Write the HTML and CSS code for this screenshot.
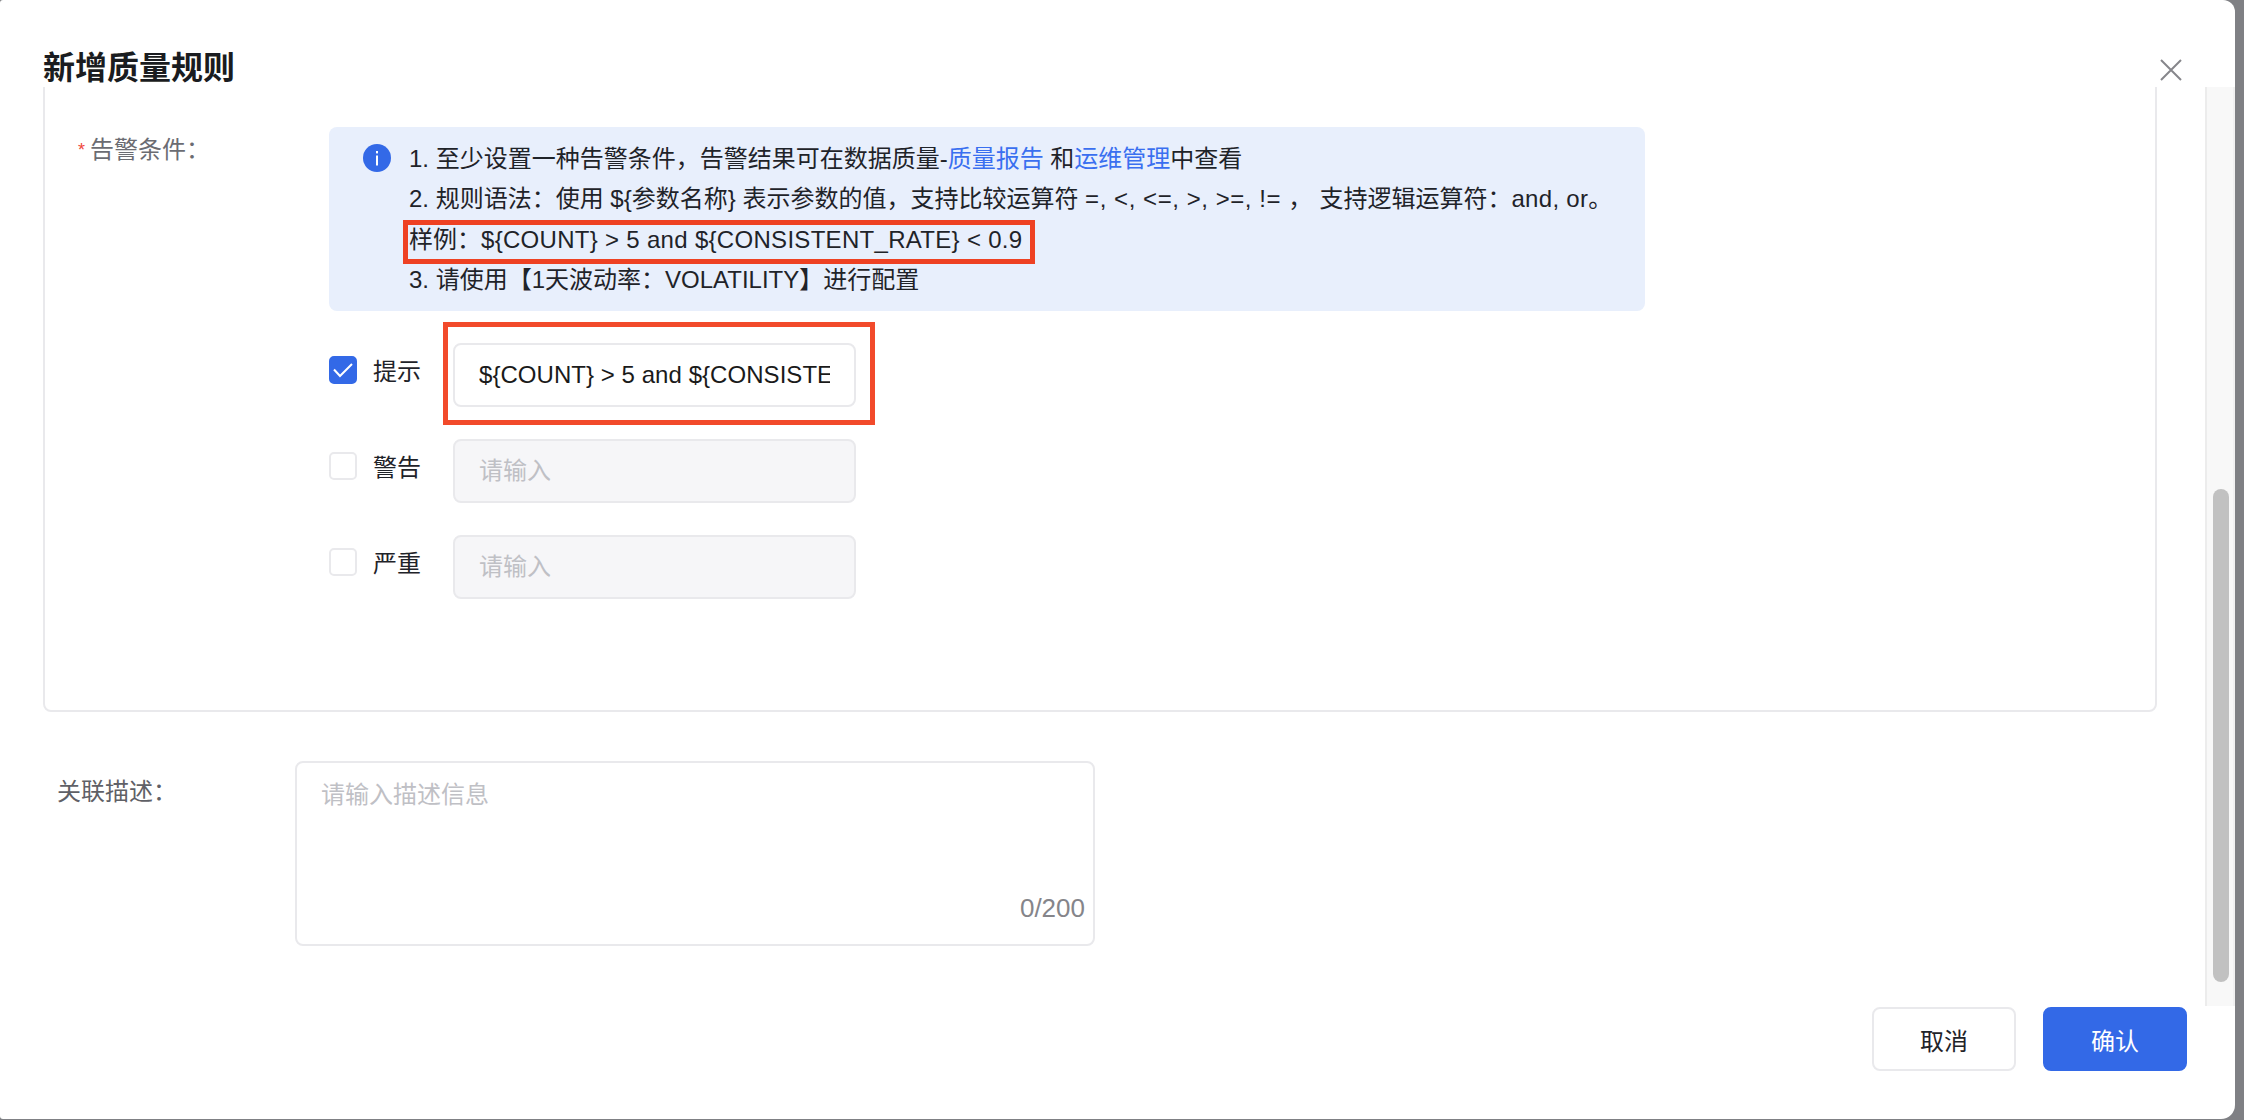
FILE: index.html
```html
<!DOCTYPE html>
<html lang="zh-CN">
<head>
<meta charset="utf-8">
<title>新增质量规则</title>
<link rel="stylesheet" href="styles.css">
</head>
<body>
<div class="dialog">
  <header class="dialog-head">
    <h1 class="dialog-title">新增质量规则</h1>
    <svg class="close" viewBox="0 0 22 22" width="22" height="22"><path d="M1 1 L21 21 M21 1 L1 21"/></svg>
  </header>
  <div class="dialog-body">
    <div class="scroller">
      <section class="panel">
        <div class="alarm">
          <div class="form-label"><span class="star">*</span>告警条件：</div>
          <div class="alarm-main">
            <div class="notice">
              <svg class="info" viewBox="0 0 28 28" width="28" height="28"><circle cx="14" cy="14" r="14" fill="#3369e7"/><rect x="13" y="11.5" width="2" height="10" fill="#fff"/><rect x="13" y="7" width="2" height="2.4" fill="#fff"/></svg>
              <div class="notice-text">
                <p>1. 至少设置一种告警条件，告警结果可在数据质量-<a class="link">质量报告</a> 和<a class="link">运维管理</a>中查看</p>
                <p>2. 规则语法：使用 ${参数名称} 表示参数的值，支持比较运算符 <span class="ops">=, &lt;, &lt;=, &gt;, &gt;=, != ，</span> 支持逻辑运算符：<span class="en">and, or</span>。</p>
                <p class="marked">样例：<span class="en">${COUNT} &gt; 5 and ${CONSISTENT_RATE} &lt; 0.9</span></p>
                <p>3. 请使用【1天波动率：VOLATILITY】进行配置</p>
              </div>
            </div>
            <div class="level-row">
              <span class="check on"><svg viewBox="0 0 28 28" width="28" height="28"><path d="M5 13.5 L11 20 L23 8"/></svg></span>
              <span class="level-name">提示</span>
              <span class="field-wrap"><input class="field" value="${COUNT} &gt; 5 and ${CONSISTENT_RATE} &lt; 0.9" readonly><span class="mark-box"></span></span>
            </div>
            <div class="level-row">
              <span class="check"></span>
              <span class="level-name">警告</span>
              <span class="field-wrap"><input class="field off" placeholder="请输入" disabled></span>
            </div>
            <div class="level-row">
              <span class="check"></span>
              <span class="level-name">严重</span>
              <span class="field-wrap"><input class="field off" placeholder="请输入" disabled></span>
            </div>
          </div>
        </div>
      </section>
      <div class="desc-row">
        <div class="desc-label">关联描述：</div>
        <div class="desc-box">
          <textarea class="desc-input" placeholder="请输入描述信息"></textarea>
          <span class="counter">0/200</span>
        </div>
      </div>
    </div>
    <div class="track"><div class="thumb"></div></div>
  </div>
  <footer class="dialog-foot">
    <button class="btn">取消</button>
    <button class="btn primary">确认</button>
  </footer>
</div>
</body>
</html>
```
FILE: styles.css
```css
* { box-sizing: border-box; }
html, body { margin: 0; height: 100%; }
body {
  background: #7f8084;
  overflow: hidden;
  font-family: "Liberation Sans", "Noto Sans CJK SC", sans-serif;
  font-size: 24px;
  color: #1f2329;
}
.dialog {
  width: 2235px;
  height: 1119px;
  background: #fff;
  border-radius: 3px 12px 14px 3px;
  display: flex;
  flex-direction: column;
  overflow: hidden;
}
.dialog-head {
  height: 87px;
  flex: none;
  padding: 0 53px 0 43px;
  display: flex;
  justify-content: space-between;
  align-items: flex-start;
}
.dialog-title {
  margin: 50px 0 0;
  font-size: 32px;
  line-height: 36px;
  font-weight: 600;
  color: #1a1c20;
}
.close { margin-top: 59px; }
.close path { stroke: #86868b; stroke-width: 2; fill: none; }
.dialog-body {
  flex: none;
  height: 919px;
  display: flex;
}
.scroller {
  width: 2205px;
  flex: none;
  overflow: hidden;
  padding: 0 48px 0 43px;
}
.panel {
  margin-top: -20px;
  height: 645px;
  border: 2px solid #e9e9ec;
  border-radius: 8px;
  padding: 58px 0 0 33px;
}
.alarm { display: flex; }
.form-label {
  width: 251px;
  flex: none;
  color: #6b6c72;
  line-height: 34px;
  margin-top: 6px;
}
.star { color: #f0473c; font-size: 18px; vertical-align: 2px; margin-right: 5px; }
.alarm-main { width: 1316px; flex: none; }
.notice {
  height: 184px;
  border-radius: 8px;
  background: #e8effc;
  display: flex;
  padding: 12px 0 0 34px;
  margin-bottom: 32px;
}
.info { flex: none; margin: 5px 18px 0 0; }
.notice-text p { margin: 0; line-height: 40px; white-space: nowrap; }
.link { color: #3a6ff0; }
.en { letter-spacing: 0.3px; }
.ops { letter-spacing: 0.55px; }
.notice-text .marked {
  width: 622px;
  height: 34px;
  margin: 6px 0 1px -1px;
  padding-left: 1px;
  line-height: 30px;
  outline: 5px solid #ee4123;
  outline-offset: 0;
}
.level-row {
  display: flex;
  align-items: flex-start;
  margin-bottom: 32px;
}
.check {
  width: 28px;
  height: 28px;
  margin-top: 13px;
  border: 2px solid #e9e9ec;
  border-radius: 5px;
  background: #fff;
  flex: none;
  position: relative;
}
.check.on { background: #3369e7; border-color: #3369e7; }
.check svg { display: block; margin: -2px; }
.check path { stroke: #fff; stroke-width: 2; fill: none; }
.level-name {
  margin: 0 32px 0 16px;
  width: 48px;
  line-height: 58px;
  white-space: nowrap;
}
.field-wrap { position: relative; display: block; width: 403px; height: 64px; flex: none; }
.field {
  display: block;
  width: 100%;
  height: 64px;
  border: 2px solid #e9e9ec;
  border-radius: 8px;
  padding: 0 24px;
  font: inherit;
  color: #1a1a1a;
  background: #fff;
  outline: none;
}
.field:not(.off) { letter-spacing: 0.05px; }
.field.off { background: #f6f6f8; }
.field::placeholder, .desc-input::placeholder { color: #bfc0c5; opacity: 1; }
.mark-box {
  position: absolute;
  top: -21px;
  left: -10px;
  right: -19px;
  bottom: -18px;
  border: 5px solid #f24a2b;
  pointer-events: none;
}
.desc-row { display: flex; margin-top: 49px; padding-left: 14px; }
.desc-label {
  width: 238px;
  flex: none;
  color: #5f6066;
  line-height: 34px;
  margin-top: 14px;
}
.desc-box { position: relative; width: 800px; height: 185px; flex: none; }
.desc-input {
  display: block;
  width: 100%;
  height: 100%;
  border: 2px solid #e9e9ec;
  border-radius: 8px;
  padding: 12px 24px;
  font: inherit;
  line-height: 40px;
  resize: none;
  outline: none;
}
.counter {
  position: absolute;
  right: 10px;
  top: 130px;
  line-height: 34px;
  color: #85858a;
  font-size: 26px;
}
.track {
  flex: none;
  width: 30px;
  background: #f8f8f8;
  border-left: 2px solid #ececec;
  border-right: 2px solid #f1f1f1;
  padding: 402px 4px 0 6px;
}
.thumb { height: 493px; border-radius: 8px; background: #c1c1c1; }
.dialog-foot {
  flex: none;
  display: flex;
  justify-content: flex-end;
  gap: 27px;
  padding: 1px 48px 0 0;
}
.btn {
  width: 144px;
  height: 64px;
  border: 2px solid #e9e9ec;
  border-radius: 8px;
  background: #fff;
  color: #1f2329;
  font: inherit;
  padding: 0;
}
.btn.primary { background: #3369e7; border-color: #3369e7; color: #fff; }
```
